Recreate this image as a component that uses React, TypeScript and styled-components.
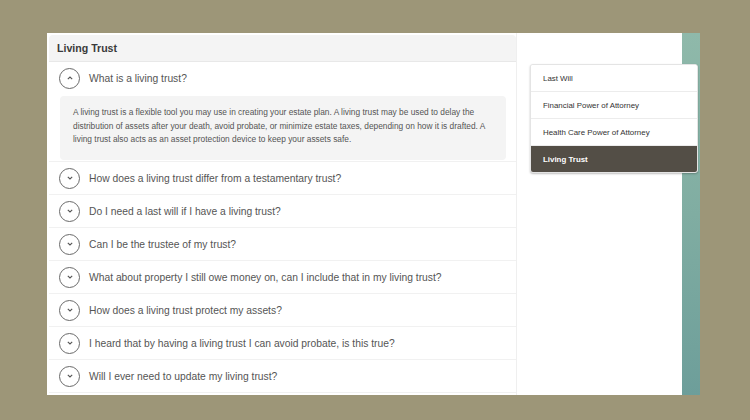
import { useState } from "react";
import { styled, createGlobalStyle } from "styled-components";

const GlobalStyle = createGlobalStyle`
  html, body {
    margin: 0;
    padding: 0;
    background: #9d9678;
  }
  body {
    font-family: "Liberation Sans", Arial, sans-serif;
  }
`;

const Page = styled.div`
  padding: 33px 0 0 47px;
  width: 750px;
  height: 420px;
  box-sizing: border-box;
`;

const Frame = styled.div`
  width: 653px;
  height: 362px;
  display: grid;
  grid-template-columns: 470px 1fr;
  background:
    linear-gradient(to right, #ffffff 0 635px, transparent 635px),
    linear-gradient(180deg, #8fb9aa 0%, #80ada2 50%, #6d9e9a 100%);
  overflow: hidden;
`;

const LeftCol = styled.div`
  padding: 2px 0 0 2px;
  border-right: 1px solid #efefef;
  display: flex;
  flex-direction: column;
`;

const Header = styled.div`
  height: 26px;
  display: flex;
  align-items: center;
  padding-left: 8px;
  background: #f4f4f4;
  border-bottom: 1px solid #e8e8e8;
  border-radius: 4px 4px 0 0;
  font-size: 10.6px;
  font-weight: 700;
  color: #3a3a3a;
`;

const Row = styled.div<{ $open?: boolean }>`
  height: 32px;
  display: flex;
  align-items: center;
  gap: 9px;
  padding-left: 10px;
  border-bottom: ${(p) => (p.$open ? "none" : "1px solid #f1f1f1")};
  font-size: 10.3px;
  color: #555;
  cursor: pointer;
`;

const Circle = styled.span`
  width: 19px;
  height: 19px;
  border: 1px solid #6a6a6a;
  border-radius: 50%;
  display: flex;
  align-items: center;
  justify-content: center;
  flex: none;
`;

const Answer = styled.div`
  margin: 2px 10px 0 11px;
  padding: 10px 12px 0 13px;
  height: 54px;
  background: #f4f4f4;
  border-radius: 4px;
  font-size: 8.35px;
  line-height: 13.5px;
  color: #555;
`;

const AnswerWrap = styled.div`
  padding-bottom: 1px;
  border-bottom: 1px solid #f1f1f1;
`;

const Sidebar = styled.div`
  padding: 31px 0 0 13px;
`;

const Card = styled.ul`
  list-style: none;
  margin: 0;
  padding: 0;
  width: 166px;
  background: #fff;
  border: 1px solid #e4e4e4;
  border-radius: 3px;
  box-shadow: 0 1px 2px rgba(0, 0, 0, 0.25);
  overflow: hidden;
`;

const Item = styled.li<{ $active?: boolean }>`
  height: 26px;
  display: flex;
  align-items: center;
  padding-left: 12px;
  font-size: 7.9px;
  font-weight: ${(p) => (p.$active ? 700 : 400)};
  color: ${(p) => (p.$active ? "#fff" : "#333")};
  background: ${(p) => (p.$active ? "#534e46" : "#fff")};
  border-top: 1px solid #ececec;
  &:first-child {
    border-top: none;
  }
`;

const Chevron = ({ up }: { up: boolean }) => (
  <svg width="8" height="6" viewBox="0 0 8 6">
    <path
      d={up ? "M1.8 4.2 L4 2 L6.2 4.2" : "M1.8 1.8 L4 4 L6.2 1.8"}
      fill="none"
      stroke="#555"
      strokeWidth="1.1"
    />
  </svg>
);

const questions = [
  "What is a living trust?",
  "How does a living trust differ from a testamentary trust?",
  "Do I need a last will if I have a living trust?",
  "Can I be the trustee of my trust?",
  "What about property I still owe money on, can I include that in my living trust?",
  "How does a living trust protect my assets?",
  "I heard that by having a living trust I can avoid probate, is this true?",
  "Will I ever need to update my living trust?",
];

const topics = [
  "Last Will",
  "Financial Power of Attorney",
  "Health Care Power of Attorney",
  "Living Trust",
];

const App = (): JSX.Element => {
  const [open, setOpen] = useState(0);
  return (
    <Page>
      <GlobalStyle />
      <Frame>
        <LeftCol>
          <Header>Living Trust</Header>
          {questions.map((q, i) => (
            <div key={q}>
              <Row $open={open === i} onClick={() => setOpen(open === i ? -1 : i)}>
                <Circle>
                  <Chevron up={open === i} />
                </Circle>
                {q}
              </Row>
              {open === i && (
                <AnswerWrap>
                  <Answer>
                    A living trust is a flexible tool you may use in creating your estate plan. A
                    living trust may be used to delay the distribution of assets after your death,
                    avoid probate, or minimize estate taxes, depending on how it is drafted. A
                    living trust also acts as an asset protection device to keep your assets safe.
                  </Answer>
                </AnswerWrap>
              )}
            </div>
          ))}
        </LeftCol>
        <Sidebar>
          <Card>
            {topics.map((t) => (
              <Item key={t} $active={t === "Living Trust"}>
                {t}
              </Item>
            ))}
          </Card>
        </Sidebar>
      </Frame>
    </Page>
  );
};

export default App;
